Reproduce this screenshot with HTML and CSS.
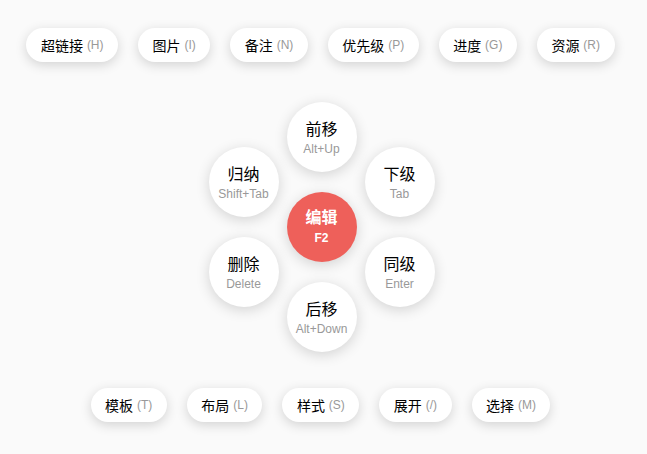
FILE: index.html
```html
<!DOCTYPE html>
<html lang="zh">
<head>
<meta charset="utf-8">
<title>Menu</title>
<link rel="stylesheet" href="styles.css">
</head>
<body>
<div class="page">
  <div class="row row-top">
    <div class="pill">超链接 <span class="key">(H)</span></div>
    <div class="pill">图片 <span class="key">(I)</span></div>
    <div class="pill">备注 <span class="key">(N)</span></div>
    <div class="pill">优先级 <span class="key">(P)</span></div>
    <div class="pill">进度 <span class="key">(G)</span></div>
    <div class="pill">资源 <span class="key">(R)</span></div>
  </div>
  <div class="wheel">
    <div class="node n-top"><span class="label">前移</span><span class="sub">Alt+Up</span></div>
    <div class="node n-tl"><span class="label">归纳</span><span class="sub">Shift+Tab</span></div>
    <div class="node n-tr"><span class="label">下级</span><span class="sub">Tab</span></div>
    <div class="node n-center"><span class="label">编辑</span><span class="sub">F2</span></div>
    <div class="node n-bl"><span class="label">删除</span><span class="sub">Delete</span></div>
    <div class="node n-br"><span class="label">同级</span><span class="sub">Enter</span></div>
    <div class="node n-bottom"><span class="label">后移</span><span class="sub">Alt+Down</span></div>
  </div>
  <div class="row row-bottom">
    <div class="pill">模板 <span class="key">(T)</span></div>
    <div class="pill">布局 <span class="key">(L)</span></div>
    <div class="pill">样式 <span class="key">(S)</span></div>
    <div class="pill">展开 <span class="key">(/)</span></div>
    <div class="pill">选择 <span class="key">(M)</span></div>
  </div>
</div>
</body>
</html>
```

FILE: styles.css
```css
html, body {
  margin: 0;
  padding: 0;
  background: #fafafa;
}
body {
  font-family: "Liberation Sans", Arial, "Noto Sans CJK SC", sans-serif;
  color: #000;
}
.page {
  width: 641px;
  padding-top: 28px;
  padding-bottom: 32px;
}
.row {
  display: flex;
  justify-content: center;
  gap: 20px;
}
.pill {
  height: 34px;
  padding: 0 14.5px;
  border-radius: 17px;
  background: #fff;
  box-shadow: 0 3px 12px rgba(0, 0, 0, 0.16);
  display: flex;
  align-items: center;
  font-size: 14px;
  white-space: pre;
}
.key {
  font-size: 12px;
  color: #999;
}
.wheel {
  position: relative;
  width: 226px;
  height: 250px;
  margin: 40px auto 36px;
  left: 1px;
}
.node {
  position: absolute;
  width: 70px;
  height: 70px;
  box-sizing: border-box;
  padding-top: 4px;
  border-radius: 50%;
  background: #fff;
  box-shadow: 0 3px 14px rgba(0, 0, 0, 0.16);
  display: flex;
  flex-direction: column;
  align-items: center;
  justify-content: center;
}
.label {
  font-size: 16px;
  line-height: 20px;
}
.sub {
  font-size: 12px;
  line-height: 18px;
  color: #999;
}
.n-top { left: 78px; top: 0; }
.n-tl { left: 0; top: 45px; }
.n-tr { left: 156px; top: 45px; }
.n-center { left: 78px; top: 90px; background: #ee605a; padding-top: 2px; }
.n-bl { left: 0; top: 135px; }
.n-br { left: 156px; top: 135px; }
.n-bottom { left: 78px; top: 180px; }
.n-center .label {
  color: #fff;
  font-weight: bold;
  font-size: 16px;
}
.n-center .sub {
  color: #fff;
  font-weight: bold;
  line-height: 20px;
}
```
